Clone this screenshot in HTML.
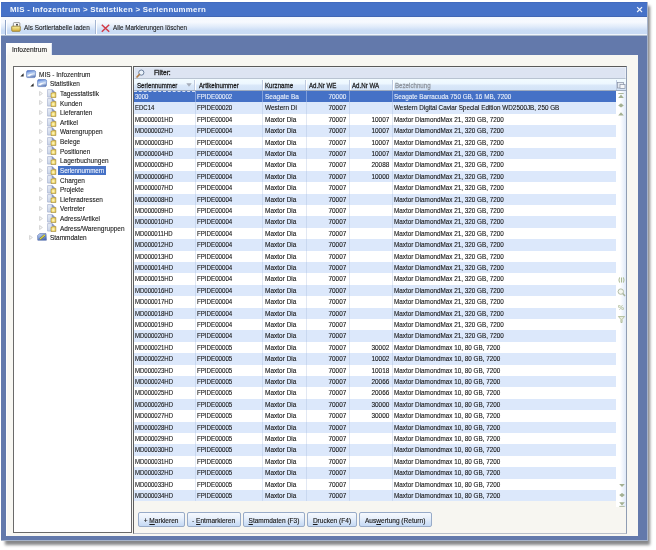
<!DOCTYPE html>
<html><head><meta charset="utf-8"><style>
*{box-sizing:border-box}
html,body{margin:0;padding:0}
body{width:656px;height:550px;position:relative;overflow:hidden;background:#fff;font-family:"Liberation Sans",sans-serif;color:#000}
.a{position:absolute}
.t{position:absolute;white-space:nowrap;line-height:1;-webkit-text-stroke:0.12px currentColor}
svg{position:absolute;overflow:visible}
</style></head>
<body>
<div class="a" style="left:5px;top:5.5px;width:645px;height:539.5px;background:rgba(60,62,64,0.62);filter:blur(1.6px)"></div>
<div class="a" style="left:1.2px;top:1.9px;width:646.6px;height:539.4px;background:#a6b3ca"></div>
<div class="a" style="left:1.2px;top:1.9px;width:645.6px;height:538.4px;background:#6379ab"></div>
<div class="a" style="left:1.2px;top:1.9px;width:645.8px;height:14.9px;background:linear-gradient(#3d63b6 0px,#4672c8 1px,#4672c8 13.5px,#3f62ac 14.9px)"></div>
<div class="t" style="left:10.00px;top:6.00px;font-size:7.3px;color:#f2f6fd;font-weight:bold;transform:scaleX(1.08);transform-origin:0 0;letter-spacing:0.24px;-webkit-text-stroke:0">MIS - Infozentrum &gt; Statistiken &gt; Seriennummern</div>
<svg style="left:636.9px;top:6.8px" width="5.2" height="5.2" viewBox="0 0 5.2 5.2"><path d="M0.6 0.6 L4.6 4.6 M4.6 0.6 L0.6 4.6" stroke="#f2f6fd" stroke-width="1.25" stroke-linecap="square"/></svg>
<div class="a" style="left:1.2px;top:16.8px;width:645.8px;height:17.6px;background:linear-gradient(#f4f8fe 0%,#f6f9fe 30%,#e2ecfa 55%,#cadcf5 80%,#c8dbf5 100%)"></div>
<div class="a" style="left:1.2px;top:33.8px;width:645.8px;height:1px;background:#eef4fc"></div>
<div class="a" style="left:1.2px;top:34.8px;width:645.8px;height:1.6px;background:#aebccd"></div>
<div class="a" style="left:5.3px;top:19.5px;width:1px;height:15px;background:#8fa3c6"></div>
<div class="a" style="left:6.3px;top:19.5px;width:1px;height:15px;background:#ffffff"></div>
<div class="a" style="left:95px;top:20px;width:1px;height:14px;background:#a5b6d3"></div>
<div class="a" style="left:96px;top:20px;width:1px;height:14px;background:#fff"></div>
<svg style="left:11.2px;top:22.3px" width="10" height="10" viewBox="0 0 10 10"><defs><linearGradient id="fg" x1="0" y1="0" x2="0" y2="1"><stop offset="0" stop-color="#f8f0a0"/><stop offset="1" stop-color="#d4ac38"/></linearGradient></defs><rect x="2.4" y="0.6" width="6.4" height="5.6" rx="0.8" fill="#fbfbfb" stroke="#7d7d7d" stroke-width="0.8"/><circle cx="6" cy="2.8" r="1" fill="#3a3a3a"/><path d="M0.7 4.8 Q0.7 4.2 1.4 4.2 L8.6 4.2 Q9.3 4.2 9.3 4.9 L9.2 8.6 Q9.2 9.3 8.5 9.3 L1.5 9.3 Q0.8 9.3 0.8 8.6 Z" fill="url(#fg)" stroke="#8f7526" stroke-width="0.8"/></svg>
<div class="t" style="left:23.80px;top:24.00px;font-size:7.9px;color:#1a1a1a;transform:scaleX(0.81);transform-origin:0 0;">Als Sortiertabelle laden</div>
<svg style="left:100.5px;top:24px" width="9" height="8.5" viewBox="0 0 9 8.5"><path d="M0.8 0.8 L8.2 7.7 M8.2 0.8 L0.8 7.7" stroke="#d23a46" stroke-width="1.5"/></svg>
<div class="t" style="left:112.60px;top:24.00px;font-size:7.9px;color:#1a1a1a;transform:scaleX(0.795);transform-origin:0 0;">Alle Markierungen l&#246;schen</div>
<div class="a" style="left:5.8px;top:43px;width:45.9px;height:12.5px;background:linear-gradient(#ffffff 0%,#fbfaf6 60%,#f8f7f2 100%);border-top:1px solid #fff;border-left:1px solid #fff;border-right:1px solid #dfe6f2"></div>
<div class="t" style="left:11.90px;top:47.00px;font-size:6.9px;color:#1a1a1a;transform:scaleX(0.96);transform-origin:0 0;">Infozentrum</div>
<div class="a" style="left:5.8px;top:54.8px;width:632.4px;height:481.2px;background:#f8f7f2;border-left:1px solid #fdfdfb"></div>
<div class="a" style="left:13px;top:66px;width:118.6px;height:466.5px;background:#fff;border:1px solid #6a6a6a"></div>
<svg style="left:19.7px;top:72.8px" width="4" height="4" viewBox="0 0 4 4"><path d="M3.6 0.2 L3.6 3.4 L0.3 3.4 Z" fill="#2a2a2a"/></svg>
<svg style="left:26.2px;top:69.8px" width="10" height="8" viewBox="0 0 10 8"><defs><linearGradient id="bi0" x1="0" y1="0" x2="0.3" y2="1"><stop offset="0" stop-color="#3f68cc"/><stop offset="0.35" stop-color="#9fbcec"/><stop offset="0.7" stop-color="#c9d8f0"/><stop offset="1" stop-color="#6b86bd"/></linearGradient></defs><path d="M1.8 0.6 L8.2 0.6 Q9.6 0.6 9.6 2.2 L9.4 6.4 Q9.2 7.6 7.8 7.6 L1.6 7.6 Q0.4 7.6 0.5 6.2 L0.6 2 Q0.7 0.6 1.8 0.6 Z" fill="url(#bi0)" stroke="#5474b8" stroke-width="0.6"/><path d="M1.6 5.8 Q3.5 3.2 8.4 3.4 Q5 4.6 3.2 6.4 Z" fill="#ffffff" opacity="0.9"/></svg>
<div class="t" style="left:39.00px;top:71.00px;font-size:8.1px;color:#1a1a1a;transform:scaleX(0.8);transform-origin:0 0;">MIS - Infozentrum</div>
<svg style="left:29.799999999999997px;top:82.82000000000001px" width="4" height="4" viewBox="0 0 4 4"><path d="M3.6 0.2 L3.6 3.4 L0.3 3.4 Z" fill="#2a2a2a"/></svg>
<svg style="left:36.6px;top:78.92px" width="10" height="8" viewBox="0 0 10 8"><defs><linearGradient id="bi1" x1="0" y1="0" x2="0.3" y2="1"><stop offset="0" stop-color="#3f68cc"/><stop offset="0.35" stop-color="#9fbcec"/><stop offset="0.7" stop-color="#c9d8f0"/><stop offset="1" stop-color="#6b86bd"/></linearGradient></defs><path d="M1.8 0.6 L8.2 0.6 Q9.6 0.6 9.6 2.2 L9.4 6.4 Q9.2 7.6 7.8 7.6 L1.6 7.6 Q0.4 7.6 0.5 6.2 L0.6 2 Q0.7 0.6 1.8 0.6 Z" fill="url(#bi1)" stroke="#5474b8" stroke-width="0.6"/><path d="M1.6 5.8 Q3.5 3.2 8.4 3.4 Q5 4.6 3.2 6.4 Z" fill="#ffffff" opacity="0.9"/></svg>
<div class="t" style="left:49.50px;top:80.00px;font-size:8.1px;color:#1a1a1a;transform:scaleX(0.8);transform-origin:0 0;">Statistiken</div>
<svg style="left:39.2px;top:90.64px" width="4" height="5" viewBox="0 0 4 5"><path d="M0.6 0.5 L3.4 2.5 L0.6 4.5 Z" fill="#fafafa" stroke="#b9b9b9" stroke-width="0.6"/></svg>
<svg style="left:47.2px;top:88.64px" width="9" height="9" viewBox="0 0 9 9"><defs><linearGradient id="di2" x1="0" y1="0" x2="1" y2="1"><stop offset="0" stop-color="#f2f5fb"/><stop offset="1" stop-color="#aebfdc"/></linearGradient><radialGradient id="dy2" cx="0.45" cy="0.55" r="0.75"><stop offset="0" stop-color="#fffbd0"/><stop offset="0.5" stop-color="#f0d870"/><stop offset="1" stop-color="#b8922c"/></radialGradient></defs><path d="M0.6 0.6 L5.2 0.6 L7.4 2.8 L7.4 8.1 L0.6 8.1 Z" fill="url(#di2)" stroke="#96a3c4" stroke-width="0.6"/><path d="M5.2 0.6 L5.2 2.8 L7.4 2.8" fill="#7f8cbc" stroke="#7f8cbc" stroke-width="0.6"/><path d="M4 4.2 L6 3.6 L8.9 3.4 L8.9 8.5 L4 8.5 Z" fill="url(#dy2)" stroke="#a0842c" stroke-width="0.5"/></svg>
<div class="t" style="left:59.80px;top:90.00px;font-size:8.1px;color:#1a1a1a;transform:scaleX(0.8);transform-origin:0 0;">Tagesstatistik</div>
<svg style="left:39.2px;top:100.26px" width="4" height="5" viewBox="0 0 4 5"><path d="M0.6 0.5 L3.4 2.5 L0.6 4.5 Z" fill="#fafafa" stroke="#b9b9b9" stroke-width="0.6"/></svg>
<svg style="left:47.2px;top:98.26px" width="9" height="9" viewBox="0 0 9 9"><defs><linearGradient id="di3" x1="0" y1="0" x2="1" y2="1"><stop offset="0" stop-color="#f2f5fb"/><stop offset="1" stop-color="#aebfdc"/></linearGradient><radialGradient id="dy3" cx="0.45" cy="0.55" r="0.75"><stop offset="0" stop-color="#fffbd0"/><stop offset="0.5" stop-color="#f0d870"/><stop offset="1" stop-color="#b8922c"/></radialGradient></defs><path d="M0.6 0.6 L5.2 0.6 L7.4 2.8 L7.4 8.1 L0.6 8.1 Z" fill="url(#di3)" stroke="#96a3c4" stroke-width="0.6"/><path d="M5.2 0.6 L5.2 2.8 L7.4 2.8" fill="#7f8cbc" stroke="#7f8cbc" stroke-width="0.6"/><path d="M4 4.2 L6 3.6 L8.9 3.4 L8.9 8.5 L4 8.5 Z" fill="url(#dy3)" stroke="#a0842c" stroke-width="0.5"/></svg>
<div class="t" style="left:59.80px;top:100.00px;font-size:8.1px;color:#1a1a1a;transform:scaleX(0.8);transform-origin:0 0;">Kunden</div>
<svg style="left:39.2px;top:109.88px" width="4" height="5" viewBox="0 0 4 5"><path d="M0.6 0.5 L3.4 2.5 L0.6 4.5 Z" fill="#fafafa" stroke="#b9b9b9" stroke-width="0.6"/></svg>
<svg style="left:47.2px;top:107.88px" width="9" height="9" viewBox="0 0 9 9"><defs><linearGradient id="di4" x1="0" y1="0" x2="1" y2="1"><stop offset="0" stop-color="#f2f5fb"/><stop offset="1" stop-color="#aebfdc"/></linearGradient><radialGradient id="dy4" cx="0.45" cy="0.55" r="0.75"><stop offset="0" stop-color="#fffbd0"/><stop offset="0.5" stop-color="#f0d870"/><stop offset="1" stop-color="#b8922c"/></radialGradient></defs><path d="M0.6 0.6 L5.2 0.6 L7.4 2.8 L7.4 8.1 L0.6 8.1 Z" fill="url(#di4)" stroke="#96a3c4" stroke-width="0.6"/><path d="M5.2 0.6 L5.2 2.8 L7.4 2.8" fill="#7f8cbc" stroke="#7f8cbc" stroke-width="0.6"/><path d="M4 4.2 L6 3.6 L8.9 3.4 L8.9 8.5 L4 8.5 Z" fill="url(#dy4)" stroke="#a0842c" stroke-width="0.5"/></svg>
<div class="t" style="left:59.80px;top:109.00px;font-size:8.1px;color:#1a1a1a;transform:scaleX(0.8);transform-origin:0 0;">Lieferanten</div>
<svg style="left:39.2px;top:119.5px" width="4" height="5" viewBox="0 0 4 5"><path d="M0.6 0.5 L3.4 2.5 L0.6 4.5 Z" fill="#fafafa" stroke="#b9b9b9" stroke-width="0.6"/></svg>
<svg style="left:47.2px;top:117.5px" width="9" height="9" viewBox="0 0 9 9"><defs><linearGradient id="di5" x1="0" y1="0" x2="1" y2="1"><stop offset="0" stop-color="#f2f5fb"/><stop offset="1" stop-color="#aebfdc"/></linearGradient><radialGradient id="dy5" cx="0.45" cy="0.55" r="0.75"><stop offset="0" stop-color="#fffbd0"/><stop offset="0.5" stop-color="#f0d870"/><stop offset="1" stop-color="#b8922c"/></radialGradient></defs><path d="M0.6 0.6 L5.2 0.6 L7.4 2.8 L7.4 8.1 L0.6 8.1 Z" fill="url(#di5)" stroke="#96a3c4" stroke-width="0.6"/><path d="M5.2 0.6 L5.2 2.8 L7.4 2.8" fill="#7f8cbc" stroke="#7f8cbc" stroke-width="0.6"/><path d="M4 4.2 L6 3.6 L8.9 3.4 L8.9 8.5 L4 8.5 Z" fill="url(#dy5)" stroke="#a0842c" stroke-width="0.5"/></svg>
<div class="t" style="left:59.80px;top:119.00px;font-size:8.1px;color:#1a1a1a;transform:scaleX(0.8);transform-origin:0 0;">Artikel</div>
<svg style="left:39.2px;top:129.12px" width="4" height="5" viewBox="0 0 4 5"><path d="M0.6 0.5 L3.4 2.5 L0.6 4.5 Z" fill="#fafafa" stroke="#b9b9b9" stroke-width="0.6"/></svg>
<svg style="left:47.2px;top:127.12px" width="9" height="9" viewBox="0 0 9 9"><defs><linearGradient id="di6" x1="0" y1="0" x2="1" y2="1"><stop offset="0" stop-color="#f2f5fb"/><stop offset="1" stop-color="#aebfdc"/></linearGradient><radialGradient id="dy6" cx="0.45" cy="0.55" r="0.75"><stop offset="0" stop-color="#fffbd0"/><stop offset="0.5" stop-color="#f0d870"/><stop offset="1" stop-color="#b8922c"/></radialGradient></defs><path d="M0.6 0.6 L5.2 0.6 L7.4 2.8 L7.4 8.1 L0.6 8.1 Z" fill="url(#di6)" stroke="#96a3c4" stroke-width="0.6"/><path d="M5.2 0.6 L5.2 2.8 L7.4 2.8" fill="#7f8cbc" stroke="#7f8cbc" stroke-width="0.6"/><path d="M4 4.2 L6 3.6 L8.9 3.4 L8.9 8.5 L4 8.5 Z" fill="url(#dy6)" stroke="#a0842c" stroke-width="0.5"/></svg>
<div class="t" style="left:59.80px;top:128.00px;font-size:8.1px;color:#1a1a1a;transform:scaleX(0.8);transform-origin:0 0;">Warengruppen</div>
<svg style="left:39.2px;top:138.73999999999998px" width="4" height="5" viewBox="0 0 4 5"><path d="M0.6 0.5 L3.4 2.5 L0.6 4.5 Z" fill="#fafafa" stroke="#b9b9b9" stroke-width="0.6"/></svg>
<svg style="left:47.2px;top:136.73999999999998px" width="9" height="9" viewBox="0 0 9 9"><defs><linearGradient id="di7" x1="0" y1="0" x2="1" y2="1"><stop offset="0" stop-color="#f2f5fb"/><stop offset="1" stop-color="#aebfdc"/></linearGradient><radialGradient id="dy7" cx="0.45" cy="0.55" r="0.75"><stop offset="0" stop-color="#fffbd0"/><stop offset="0.5" stop-color="#f0d870"/><stop offset="1" stop-color="#b8922c"/></radialGradient></defs><path d="M0.6 0.6 L5.2 0.6 L7.4 2.8 L7.4 8.1 L0.6 8.1 Z" fill="url(#di7)" stroke="#96a3c4" stroke-width="0.6"/><path d="M5.2 0.6 L5.2 2.8 L7.4 2.8" fill="#7f8cbc" stroke="#7f8cbc" stroke-width="0.6"/><path d="M4 4.2 L6 3.6 L8.9 3.4 L8.9 8.5 L4 8.5 Z" fill="url(#dy7)" stroke="#a0842c" stroke-width="0.5"/></svg>
<div class="t" style="left:59.80px;top:138.00px;font-size:8.1px;color:#1a1a1a;transform:scaleX(0.8);transform-origin:0 0;">Belege</div>
<svg style="left:39.2px;top:148.35999999999999px" width="4" height="5" viewBox="0 0 4 5"><path d="M0.6 0.5 L3.4 2.5 L0.6 4.5 Z" fill="#fafafa" stroke="#b9b9b9" stroke-width="0.6"/></svg>
<svg style="left:47.2px;top:146.35999999999999px" width="9" height="9" viewBox="0 0 9 9"><defs><linearGradient id="di8" x1="0" y1="0" x2="1" y2="1"><stop offset="0" stop-color="#f2f5fb"/><stop offset="1" stop-color="#aebfdc"/></linearGradient><radialGradient id="dy8" cx="0.45" cy="0.55" r="0.75"><stop offset="0" stop-color="#fffbd0"/><stop offset="0.5" stop-color="#f0d870"/><stop offset="1" stop-color="#b8922c"/></radialGradient></defs><path d="M0.6 0.6 L5.2 0.6 L7.4 2.8 L7.4 8.1 L0.6 8.1 Z" fill="url(#di8)" stroke="#96a3c4" stroke-width="0.6"/><path d="M5.2 0.6 L5.2 2.8 L7.4 2.8" fill="#7f8cbc" stroke="#7f8cbc" stroke-width="0.6"/><path d="M4 4.2 L6 3.6 L8.9 3.4 L8.9 8.5 L4 8.5 Z" fill="url(#dy8)" stroke="#a0842c" stroke-width="0.5"/></svg>
<div class="t" style="left:59.80px;top:148.00px;font-size:8.1px;color:#1a1a1a;transform:scaleX(0.8);transform-origin:0 0;">Positionen</div>
<svg style="left:39.2px;top:157.98px" width="4" height="5" viewBox="0 0 4 5"><path d="M0.6 0.5 L3.4 2.5 L0.6 4.5 Z" fill="#fafafa" stroke="#b9b9b9" stroke-width="0.6"/></svg>
<svg style="left:47.2px;top:155.98px" width="9" height="9" viewBox="0 0 9 9"><defs><linearGradient id="di9" x1="0" y1="0" x2="1" y2="1"><stop offset="0" stop-color="#f2f5fb"/><stop offset="1" stop-color="#aebfdc"/></linearGradient><radialGradient id="dy9" cx="0.45" cy="0.55" r="0.75"><stop offset="0" stop-color="#fffbd0"/><stop offset="0.5" stop-color="#f0d870"/><stop offset="1" stop-color="#b8922c"/></radialGradient></defs><path d="M0.6 0.6 L5.2 0.6 L7.4 2.8 L7.4 8.1 L0.6 8.1 Z" fill="url(#di9)" stroke="#96a3c4" stroke-width="0.6"/><path d="M5.2 0.6 L5.2 2.8 L7.4 2.8" fill="#7f8cbc" stroke="#7f8cbc" stroke-width="0.6"/><path d="M4 4.2 L6 3.6 L8.9 3.4 L8.9 8.5 L4 8.5 Z" fill="url(#dy9)" stroke="#a0842c" stroke-width="0.5"/></svg>
<div class="t" style="left:59.80px;top:157.00px;font-size:8.1px;color:#1a1a1a;transform:scaleX(0.8);transform-origin:0 0;">Lagerbuchungen</div>
<svg style="left:39.2px;top:167.6px" width="4" height="5" viewBox="0 0 4 5"><path d="M0.6 0.5 L3.4 2.5 L0.6 4.5 Z" fill="#fafafa" stroke="#b9b9b9" stroke-width="0.6"/></svg>
<svg style="left:47.2px;top:165.6px" width="9" height="9" viewBox="0 0 9 9"><defs><linearGradient id="di10" x1="0" y1="0" x2="1" y2="1"><stop offset="0" stop-color="#f2f5fb"/><stop offset="1" stop-color="#aebfdc"/></linearGradient><radialGradient id="dy10" cx="0.45" cy="0.55" r="0.75"><stop offset="0" stop-color="#fffbd0"/><stop offset="0.5" stop-color="#f0d870"/><stop offset="1" stop-color="#b8922c"/></radialGradient></defs><path d="M0.6 0.6 L5.2 0.6 L7.4 2.8 L7.4 8.1 L0.6 8.1 Z" fill="url(#di10)" stroke="#96a3c4" stroke-width="0.6"/><path d="M5.2 0.6 L5.2 2.8 L7.4 2.8" fill="#7f8cbc" stroke="#7f8cbc" stroke-width="0.6"/><path d="M4 4.2 L6 3.6 L8.9 3.4 L8.9 8.5 L4 8.5 Z" fill="url(#dy10)" stroke="#a0842c" stroke-width="0.5"/></svg>
<div class="a" style="left:58px;top:166.2px;width:48.4px;height:8.4px;background:#4571c6"></div>
<div class="t" style="left:59.80px;top:167.00px;font-size:8.1px;color:#f0f4fc;transform:scaleX(0.77);transform-origin:0 0;">Seriennummern</div>
<svg style="left:39.2px;top:177.22px" width="4" height="5" viewBox="0 0 4 5"><path d="M0.6 0.5 L3.4 2.5 L0.6 4.5 Z" fill="#fafafa" stroke="#b9b9b9" stroke-width="0.6"/></svg>
<svg style="left:47.2px;top:175.22px" width="9" height="9" viewBox="0 0 9 9"><defs><linearGradient id="di11" x1="0" y1="0" x2="1" y2="1"><stop offset="0" stop-color="#f2f5fb"/><stop offset="1" stop-color="#aebfdc"/></linearGradient><radialGradient id="dy11" cx="0.45" cy="0.55" r="0.75"><stop offset="0" stop-color="#fffbd0"/><stop offset="0.5" stop-color="#f0d870"/><stop offset="1" stop-color="#b8922c"/></radialGradient></defs><path d="M0.6 0.6 L5.2 0.6 L7.4 2.8 L7.4 8.1 L0.6 8.1 Z" fill="url(#di11)" stroke="#96a3c4" stroke-width="0.6"/><path d="M5.2 0.6 L5.2 2.8 L7.4 2.8" fill="#7f8cbc" stroke="#7f8cbc" stroke-width="0.6"/><path d="M4 4.2 L6 3.6 L8.9 3.4 L8.9 8.5 L4 8.5 Z" fill="url(#dy11)" stroke="#a0842c" stroke-width="0.5"/></svg>
<div class="t" style="left:59.80px;top:177.00px;font-size:8.1px;color:#1a1a1a;transform:scaleX(0.8);transform-origin:0 0;">Chargen</div>
<svg style="left:39.2px;top:186.84px" width="4" height="5" viewBox="0 0 4 5"><path d="M0.6 0.5 L3.4 2.5 L0.6 4.5 Z" fill="#fafafa" stroke="#b9b9b9" stroke-width="0.6"/></svg>
<svg style="left:47.2px;top:184.84px" width="9" height="9" viewBox="0 0 9 9"><defs><linearGradient id="di12" x1="0" y1="0" x2="1" y2="1"><stop offset="0" stop-color="#f2f5fb"/><stop offset="1" stop-color="#aebfdc"/></linearGradient><radialGradient id="dy12" cx="0.45" cy="0.55" r="0.75"><stop offset="0" stop-color="#fffbd0"/><stop offset="0.5" stop-color="#f0d870"/><stop offset="1" stop-color="#b8922c"/></radialGradient></defs><path d="M0.6 0.6 L5.2 0.6 L7.4 2.8 L7.4 8.1 L0.6 8.1 Z" fill="url(#di12)" stroke="#96a3c4" stroke-width="0.6"/><path d="M5.2 0.6 L5.2 2.8 L7.4 2.8" fill="#7f8cbc" stroke="#7f8cbc" stroke-width="0.6"/><path d="M4 4.2 L6 3.6 L8.9 3.4 L8.9 8.5 L4 8.5 Z" fill="url(#dy12)" stroke="#a0842c" stroke-width="0.5"/></svg>
<div class="t" style="left:59.80px;top:186.00px;font-size:8.1px;color:#1a1a1a;transform:scaleX(0.8);transform-origin:0 0;">Projekte</div>
<svg style="left:39.2px;top:196.46px" width="4" height="5" viewBox="0 0 4 5"><path d="M0.6 0.5 L3.4 2.5 L0.6 4.5 Z" fill="#fafafa" stroke="#b9b9b9" stroke-width="0.6"/></svg>
<svg style="left:47.2px;top:194.46px" width="9" height="9" viewBox="0 0 9 9"><defs><linearGradient id="di13" x1="0" y1="0" x2="1" y2="1"><stop offset="0" stop-color="#f2f5fb"/><stop offset="1" stop-color="#aebfdc"/></linearGradient><radialGradient id="dy13" cx="0.45" cy="0.55" r="0.75"><stop offset="0" stop-color="#fffbd0"/><stop offset="0.5" stop-color="#f0d870"/><stop offset="1" stop-color="#b8922c"/></radialGradient></defs><path d="M0.6 0.6 L5.2 0.6 L7.4 2.8 L7.4 8.1 L0.6 8.1 Z" fill="url(#di13)" stroke="#96a3c4" stroke-width="0.6"/><path d="M5.2 0.6 L5.2 2.8 L7.4 2.8" fill="#7f8cbc" stroke="#7f8cbc" stroke-width="0.6"/><path d="M4 4.2 L6 3.6 L8.9 3.4 L8.9 8.5 L4 8.5 Z" fill="url(#dy13)" stroke="#a0842c" stroke-width="0.5"/></svg>
<div class="t" style="left:59.80px;top:196.00px;font-size:8.1px;color:#1a1a1a;transform:scaleX(0.8);transform-origin:0 0;">Lieferadressen</div>
<svg style="left:39.2px;top:206.07999999999998px" width="4" height="5" viewBox="0 0 4 5"><path d="M0.6 0.5 L3.4 2.5 L0.6 4.5 Z" fill="#fafafa" stroke="#b9b9b9" stroke-width="0.6"/></svg>
<svg style="left:47.2px;top:204.07999999999998px" width="9" height="9" viewBox="0 0 9 9"><defs><linearGradient id="di14" x1="0" y1="0" x2="1" y2="1"><stop offset="0" stop-color="#f2f5fb"/><stop offset="1" stop-color="#aebfdc"/></linearGradient><radialGradient id="dy14" cx="0.45" cy="0.55" r="0.75"><stop offset="0" stop-color="#fffbd0"/><stop offset="0.5" stop-color="#f0d870"/><stop offset="1" stop-color="#b8922c"/></radialGradient></defs><path d="M0.6 0.6 L5.2 0.6 L7.4 2.8 L7.4 8.1 L0.6 8.1 Z" fill="url(#di14)" stroke="#96a3c4" stroke-width="0.6"/><path d="M5.2 0.6 L5.2 2.8 L7.4 2.8" fill="#7f8cbc" stroke="#7f8cbc" stroke-width="0.6"/><path d="M4 4.2 L6 3.6 L8.9 3.4 L8.9 8.5 L4 8.5 Z" fill="url(#dy14)" stroke="#a0842c" stroke-width="0.5"/></svg>
<div class="t" style="left:59.80px;top:205.00px;font-size:8.1px;color:#1a1a1a;transform:scaleX(0.8);transform-origin:0 0;">Vertreter</div>
<svg style="left:39.2px;top:215.7px" width="4" height="5" viewBox="0 0 4 5"><path d="M0.6 0.5 L3.4 2.5 L0.6 4.5 Z" fill="#fafafa" stroke="#b9b9b9" stroke-width="0.6"/></svg>
<svg style="left:47.2px;top:213.7px" width="9" height="9" viewBox="0 0 9 9"><defs><linearGradient id="di15" x1="0" y1="0" x2="1" y2="1"><stop offset="0" stop-color="#f2f5fb"/><stop offset="1" stop-color="#aebfdc"/></linearGradient><radialGradient id="dy15" cx="0.45" cy="0.55" r="0.75"><stop offset="0" stop-color="#fffbd0"/><stop offset="0.5" stop-color="#f0d870"/><stop offset="1" stop-color="#b8922c"/></radialGradient></defs><path d="M0.6 0.6 L5.2 0.6 L7.4 2.8 L7.4 8.1 L0.6 8.1 Z" fill="url(#di15)" stroke="#96a3c4" stroke-width="0.6"/><path d="M5.2 0.6 L5.2 2.8 L7.4 2.8" fill="#7f8cbc" stroke="#7f8cbc" stroke-width="0.6"/><path d="M4 4.2 L6 3.6 L8.9 3.4 L8.9 8.5 L4 8.5 Z" fill="url(#dy15)" stroke="#a0842c" stroke-width="0.5"/></svg>
<div class="t" style="left:59.80px;top:215.00px;font-size:8.1px;color:#1a1a1a;transform:scaleX(0.8);transform-origin:0 0;">Adress/Artikel</div>
<svg style="left:39.2px;top:225.32px" width="4" height="5" viewBox="0 0 4 5"><path d="M0.6 0.5 L3.4 2.5 L0.6 4.5 Z" fill="#fafafa" stroke="#b9b9b9" stroke-width="0.6"/></svg>
<svg style="left:47.2px;top:223.32px" width="9" height="9" viewBox="0 0 9 9"><defs><linearGradient id="di16" x1="0" y1="0" x2="1" y2="1"><stop offset="0" stop-color="#f2f5fb"/><stop offset="1" stop-color="#aebfdc"/></linearGradient><radialGradient id="dy16" cx="0.45" cy="0.55" r="0.75"><stop offset="0" stop-color="#fffbd0"/><stop offset="0.5" stop-color="#f0d870"/><stop offset="1" stop-color="#b8922c"/></radialGradient></defs><path d="M0.6 0.6 L5.2 0.6 L7.4 2.8 L7.4 8.1 L0.6 8.1 Z" fill="url(#di16)" stroke="#96a3c4" stroke-width="0.6"/><path d="M5.2 0.6 L5.2 2.8 L7.4 2.8" fill="#7f8cbc" stroke="#7f8cbc" stroke-width="0.6"/><path d="M4 4.2 L6 3.6 L8.9 3.4 L8.9 8.5 L4 8.5 Z" fill="url(#dy16)" stroke="#a0842c" stroke-width="0.5"/></svg>
<div class="t" style="left:59.80px;top:225.00px;font-size:8.1px;color:#1a1a1a;transform:scaleX(0.8);transform-origin:0 0;">Adress/Warengruppen</div>
<svg style="left:29.0px;top:234.94px" width="4" height="5" viewBox="0 0 4 5"><path d="M0.6 0.5 L3.4 2.5 L0.6 4.5 Z" fill="#fafafa" stroke="#b9b9b9" stroke-width="0.6"/></svg>
<svg style="left:36.6px;top:232.94px" width="10" height="8" viewBox="0 0 10 8"><defs><linearGradient id="si17" x1="0" y1="0" x2="0.6" y2="1"><stop offset="0" stop-color="#d2def6"/><stop offset="0.5" stop-color="#8aa6de"/><stop offset="1" stop-color="#4d6cb6"/></linearGradient></defs><path d="M0.6 2.6 L2.6 0.6 L9 0.6 L9.4 7.2 L0.8 7.2 Z" fill="url(#si17)" stroke="#4a64a4" stroke-width="0.6"/><path d="M3 6.2 L7.8 2" stroke="#6f6a30" stroke-width="2"/><path d="M3 6.2 L7.8 2" stroke="#e2dc4a" stroke-width="1.1"/></svg>
<div class="t" style="left:49.50px;top:234.00px;font-size:8.1px;color:#1a1a1a;transform:scaleX(0.8);transform-origin:0 0;">Stammdaten</div>
<div class="a" style="left:132.6px;top:66.3px;width:494.4px;height:467.6px;background:#f7f6f1;border-top:1px solid #5a5a5a;border-left:1px solid #5f5f5f;border-right:1px solid #8f9db3;border-bottom:1px solid #b9bfca"></div>
<div class="a" style="left:133.8px;top:67.3px;width:492px;height:11.6px;background:#dde4f2;border:1px solid #e9eef7;border-bottom-color:#b8c3d1"></div>
<svg style="left:136px;top:68.6px" width="9" height="9" viewBox="0 0 9 9"><circle cx="5.3" cy="3.6" r="2.6" fill="#eaf2fb" stroke="#5e7391" stroke-width="0.9"/><path d="M3.4 5.5 L1 8" stroke="#b07a44" stroke-width="1.7" stroke-linecap="round"/></svg>
<div class="t" style="left:154.20px;top:70.00px;font-size:6.9px;color:#222;transform:scaleX(0.97);transform-origin:0 0;-webkit-text-stroke:0.3px #222">Filter:</div>
<div class="a" style="left:133.6px;top:78.6px;width:492.4px;height:12.400000000000006px;background:linear-gradient(#f2fbff 0%,#eef8ff 40%,#d9e7f9 60%,#d3e3f7 100%);border-bottom:1px solid #9eabbf"></div>
<div class="t" style="left:136.70px;top:82.00px;font-size:8.0px;color:#1a1a1a;transform:scaleX(0.77);transform-origin:0 0;-webkit-text-stroke:0.28px #1a1a1a">Seriennummer</div>
<div class="t" style="left:199.20px;top:82.00px;font-size:8.0px;color:#1a1a1a;transform:scaleX(0.77);transform-origin:0 0;-webkit-text-stroke:0.28px #1a1a1a">Artikelnummer</div>
<div class="a" style="left:194.4px;top:79.8px;width:1px;height:10.200000000000006px;background:#bfcbe0"></div>
<div class="a" style="left:195.4px;top:79.8px;width:1px;height:10.200000000000006px;background:#fff"></div>
<div class="t" style="left:265.40px;top:82.00px;font-size:8.0px;color:#1a1a1a;transform:scaleX(0.77);transform-origin:0 0;-webkit-text-stroke:0.28px #1a1a1a">Kurzname</div>
<div class="a" style="left:262.2px;top:79.8px;width:1px;height:10.200000000000006px;background:#bfcbe0"></div>
<div class="a" style="left:263.2px;top:79.8px;width:1px;height:10.200000000000006px;background:#fff"></div>
<div class="t" style="left:309.00px;top:82.00px;font-size:8.0px;color:#1a1a1a;transform:scaleX(0.77);transform-origin:0 0;-webkit-text-stroke:0.28px #1a1a1a">Ad.Nr WE</div>
<div class="a" style="left:305.4px;top:79.8px;width:1px;height:10.200000000000006px;background:#bfcbe0"></div>
<div class="a" style="left:306.4px;top:79.8px;width:1px;height:10.200000000000006px;background:#fff"></div>
<div class="t" style="left:352.30px;top:82.00px;font-size:8.0px;color:#1a1a1a;transform:scaleX(0.77);transform-origin:0 0;-webkit-text-stroke:0.28px #1a1a1a">Ad.Nr WA</div>
<div class="a" style="left:348.9px;top:79.8px;width:1px;height:10.200000000000006px;background:#bfcbe0"></div>
<div class="a" style="left:349.9px;top:79.8px;width:1px;height:10.200000000000006px;background:#fff"></div>
<div class="t" style="left:395.00px;top:82.00px;font-size:8.0px;color:#8d939c;transform:scaleX(0.77);transform-origin:0 0;-webkit-text-stroke:0.28px #8d939c">Bezeichnung</div>
<div class="a" style="left:391.7px;top:79.8px;width:1px;height:10.200000000000006px;background:#bfcbe0"></div>
<div class="a" style="left:392.7px;top:79.8px;width:1px;height:10.200000000000006px;background:#fff"></div>
<div class="a" style="left:615.7px;top:79.8px;width:1px;height:10.200000000000006px;background:#bfcbe0"></div>
<svg style="left:185.5px;top:82.89999999999999px" width="6" height="4" viewBox="0 0 6 4"><path d="M0.3 0.3 L5.7 0.3 L3 3.8 Z" fill="#a5adba"/></svg>
<svg style="left:617.3px;top:81.39999999999999px" width="9" height="8" viewBox="0 0 9 8"><rect x="0.5" y="1.5" width="6" height="5.5" fill="#e4e9f1" stroke="#8791a3" stroke-width="0.7"/><rect x="3" y="3.5" width="5" height="4" fill="#f4f6f9" stroke="#8791a3" stroke-width="0.7"/></svg>
<div class="a" style="left:133.6px;top:91.00px;width:482.4px;height:11.42px;background:#4571c6"></div>
<div class="t" style="left:135.20px;top:93.00px;font-size:7.3px;color:#eaf0fb;transform:scaleX(0.821);transform-origin:0 0;">3000</div>
<div class="t" style="left:197.00px;top:93.00px;font-size:7.3px;color:#eaf0fb;transform:scaleX(0.844);transform-origin:0 0;">FPIDE00002</div>
<div class="t" style="left:264.80px;top:93.00px;font-size:7.3px;color:#eaf0fb;transform:scaleX(0.889);transform-origin:0 0;">Seagate Ba</div>
<div class="t" style="right:309.30px;top:93.00px;font-size:7.3px;color:#eaf0fb;transform:scaleX(0.88);transform-origin:100% 0;">70000</div>
<div class="t" style="left:394.30px;top:93.00px;font-size:7.3px;color:#eaf0fb;transform:scaleX(0.868);transform-origin:0 0;">Seagate Barracuda 750 GB, 16 MB, 7200</div>
<div class="a" style="left:133.6px;top:91.0px;width:61.400000000000006px;height:11.4px;border-top:1px dashed #d8e2f6"></div>
<div class="a" style="left:133.6px;top:102.40px;width:482.4px;height:11.42px;background:#dce8fb"></div>
<div class="t" style="left:135.20px;top:104.00px;font-size:7.3px;color:#151515;transform:scaleX(0.821);transform-origin:0 0;">EDC14</div>
<div class="t" style="left:197.00px;top:104.00px;font-size:7.3px;color:#151515;transform:scaleX(0.844);transform-origin:0 0;">FPIDE00020</div>
<div class="t" style="left:264.80px;top:104.00px;font-size:7.3px;color:#151515;transform:scaleX(0.889);transform-origin:0 0;">Western Di</div>
<div class="t" style="right:309.30px;top:104.00px;font-size:7.3px;color:#151515;transform:scaleX(0.88);transform-origin:100% 0;">70007</div>
<div class="t" style="left:394.30px;top:104.00px;font-size:7.3px;color:#151515;transform:scaleX(0.868);transform-origin:0 0;">Western Digital Caviar Special Edition WD2500JB, 250 GB</div>
<div class="a" style="left:133.6px;top:113.80px;width:482.4px;height:11.42px;background:#ffffff"></div>
<div class="t" style="left:135.20px;top:116.00px;font-size:7.3px;color:#151515;transform:scaleX(0.821);transform-origin:0 0;">MD000001HD</div>
<div class="t" style="left:197.00px;top:116.00px;font-size:7.3px;color:#151515;transform:scaleX(0.844);transform-origin:0 0;">FPIDE00004</div>
<div class="t" style="left:264.80px;top:116.00px;font-size:7.3px;color:#151515;transform:scaleX(0.889);transform-origin:0 0;">Maxtor Dia</div>
<div class="t" style="right:309.30px;top:116.00px;font-size:7.3px;color:#151515;transform:scaleX(0.88);transform-origin:100% 0;">70007</div>
<div class="t" style="right:266.50px;top:116.00px;font-size:7.3px;color:#151515;transform:scaleX(0.88);transform-origin:100% 0;">10007</div>
<div class="t" style="left:394.30px;top:116.00px;font-size:7.3px;color:#151515;transform:scaleX(0.868);transform-origin:0 0;">Maxtor DiamondMax 21, 320 GB, 7200</div>
<div class="a" style="left:133.6px;top:125.20px;width:482.4px;height:11.42px;background:#dce8fb"></div>
<div class="t" style="left:135.20px;top:127.00px;font-size:7.3px;color:#151515;transform:scaleX(0.821);transform-origin:0 0;">MD000002HD</div>
<div class="t" style="left:197.00px;top:127.00px;font-size:7.3px;color:#151515;transform:scaleX(0.844);transform-origin:0 0;">FPIDE00004</div>
<div class="t" style="left:264.80px;top:127.00px;font-size:7.3px;color:#151515;transform:scaleX(0.889);transform-origin:0 0;">Maxtor Dia</div>
<div class="t" style="right:309.30px;top:127.00px;font-size:7.3px;color:#151515;transform:scaleX(0.88);transform-origin:100% 0;">70007</div>
<div class="t" style="right:266.50px;top:127.00px;font-size:7.3px;color:#151515;transform:scaleX(0.88);transform-origin:100% 0;">10007</div>
<div class="t" style="left:394.30px;top:127.00px;font-size:7.3px;color:#151515;transform:scaleX(0.868);transform-origin:0 0;">Maxtor DiamondMax 21, 320 GB, 7200</div>
<div class="a" style="left:133.6px;top:136.60px;width:482.4px;height:11.42px;background:#ffffff"></div>
<div class="t" style="left:135.20px;top:139.00px;font-size:7.3px;color:#151515;transform:scaleX(0.821);transform-origin:0 0;">MD000003HD</div>
<div class="t" style="left:197.00px;top:139.00px;font-size:7.3px;color:#151515;transform:scaleX(0.844);transform-origin:0 0;">FPIDE00004</div>
<div class="t" style="left:264.80px;top:139.00px;font-size:7.3px;color:#151515;transform:scaleX(0.889);transform-origin:0 0;">Maxtor Dia</div>
<div class="t" style="right:309.30px;top:139.00px;font-size:7.3px;color:#151515;transform:scaleX(0.88);transform-origin:100% 0;">70007</div>
<div class="t" style="right:266.50px;top:139.00px;font-size:7.3px;color:#151515;transform:scaleX(0.88);transform-origin:100% 0;">10007</div>
<div class="t" style="left:394.30px;top:139.00px;font-size:7.3px;color:#151515;transform:scaleX(0.868);transform-origin:0 0;">Maxtor DiamondMax 21, 320 GB, 7200</div>
<div class="a" style="left:133.6px;top:148.00px;width:482.4px;height:11.42px;background:#dce8fb"></div>
<div class="t" style="left:135.20px;top:150.00px;font-size:7.3px;color:#151515;transform:scaleX(0.821);transform-origin:0 0;">MD000004HD</div>
<div class="t" style="left:197.00px;top:150.00px;font-size:7.3px;color:#151515;transform:scaleX(0.844);transform-origin:0 0;">FPIDE00004</div>
<div class="t" style="left:264.80px;top:150.00px;font-size:7.3px;color:#151515;transform:scaleX(0.889);transform-origin:0 0;">Maxtor Dia</div>
<div class="t" style="right:309.30px;top:150.00px;font-size:7.3px;color:#151515;transform:scaleX(0.88);transform-origin:100% 0;">70007</div>
<div class="t" style="right:266.50px;top:150.00px;font-size:7.3px;color:#151515;transform:scaleX(0.88);transform-origin:100% 0;">10007</div>
<div class="t" style="left:394.30px;top:150.00px;font-size:7.3px;color:#151515;transform:scaleX(0.868);transform-origin:0 0;">Maxtor DiamondMax 21, 320 GB, 7200</div>
<div class="a" style="left:133.6px;top:159.40px;width:482.4px;height:11.42px;background:#ffffff"></div>
<div class="t" style="left:135.20px;top:161.00px;font-size:7.3px;color:#151515;transform:scaleX(0.821);transform-origin:0 0;">MD000005HD</div>
<div class="t" style="left:197.00px;top:161.00px;font-size:7.3px;color:#151515;transform:scaleX(0.844);transform-origin:0 0;">FPIDE00004</div>
<div class="t" style="left:264.80px;top:161.00px;font-size:7.3px;color:#151515;transform:scaleX(0.889);transform-origin:0 0;">Maxtor Dia</div>
<div class="t" style="right:309.30px;top:161.00px;font-size:7.3px;color:#151515;transform:scaleX(0.88);transform-origin:100% 0;">70007</div>
<div class="t" style="right:266.50px;top:161.00px;font-size:7.3px;color:#151515;transform:scaleX(0.88);transform-origin:100% 0;">20088</div>
<div class="t" style="left:394.30px;top:161.00px;font-size:7.3px;color:#151515;transform:scaleX(0.868);transform-origin:0 0;">Maxtor DiamondMax 21, 320 GB, 7200</div>
<div class="a" style="left:133.6px;top:170.80px;width:482.4px;height:11.42px;background:#dce8fb"></div>
<div class="t" style="left:135.20px;top:173.00px;font-size:7.3px;color:#151515;transform:scaleX(0.821);transform-origin:0 0;">MD000006HD</div>
<div class="t" style="left:197.00px;top:173.00px;font-size:7.3px;color:#151515;transform:scaleX(0.844);transform-origin:0 0;">FPIDE00004</div>
<div class="t" style="left:264.80px;top:173.00px;font-size:7.3px;color:#151515;transform:scaleX(0.889);transform-origin:0 0;">Maxtor Dia</div>
<div class="t" style="right:309.30px;top:173.00px;font-size:7.3px;color:#151515;transform:scaleX(0.88);transform-origin:100% 0;">70007</div>
<div class="t" style="right:266.50px;top:173.00px;font-size:7.3px;color:#151515;transform:scaleX(0.88);transform-origin:100% 0;">10000</div>
<div class="t" style="left:394.30px;top:173.00px;font-size:7.3px;color:#151515;transform:scaleX(0.868);transform-origin:0 0;">Maxtor DiamondMax 21, 320 GB, 7200</div>
<div class="a" style="left:133.6px;top:182.20px;width:482.4px;height:11.42px;background:#ffffff"></div>
<div class="t" style="left:135.20px;top:184.00px;font-size:7.3px;color:#151515;transform:scaleX(0.821);transform-origin:0 0;">MD000007HD</div>
<div class="t" style="left:197.00px;top:184.00px;font-size:7.3px;color:#151515;transform:scaleX(0.844);transform-origin:0 0;">FPIDE00004</div>
<div class="t" style="left:264.80px;top:184.00px;font-size:7.3px;color:#151515;transform:scaleX(0.889);transform-origin:0 0;">Maxtor Dia</div>
<div class="t" style="right:309.30px;top:184.00px;font-size:7.3px;color:#151515;transform:scaleX(0.88);transform-origin:100% 0;">70007</div>
<div class="t" style="left:394.30px;top:184.00px;font-size:7.3px;color:#151515;transform:scaleX(0.868);transform-origin:0 0;">Maxtor DiamondMax 21, 320 GB, 7200</div>
<div class="a" style="left:133.6px;top:193.60px;width:482.4px;height:11.42px;background:#dce8fb"></div>
<div class="t" style="left:135.20px;top:196.00px;font-size:7.3px;color:#151515;transform:scaleX(0.821);transform-origin:0 0;">MD000008HD</div>
<div class="t" style="left:197.00px;top:196.00px;font-size:7.3px;color:#151515;transform:scaleX(0.844);transform-origin:0 0;">FPIDE00004</div>
<div class="t" style="left:264.80px;top:196.00px;font-size:7.3px;color:#151515;transform:scaleX(0.889);transform-origin:0 0;">Maxtor Dia</div>
<div class="t" style="right:309.30px;top:196.00px;font-size:7.3px;color:#151515;transform:scaleX(0.88);transform-origin:100% 0;">70007</div>
<div class="t" style="left:394.30px;top:196.00px;font-size:7.3px;color:#151515;transform:scaleX(0.868);transform-origin:0 0;">Maxtor DiamondMax 21, 320 GB, 7200</div>
<div class="a" style="left:133.6px;top:205.00px;width:482.4px;height:11.42px;background:#ffffff"></div>
<div class="t" style="left:135.20px;top:207.00px;font-size:7.3px;color:#151515;transform:scaleX(0.821);transform-origin:0 0;">MD000009HD</div>
<div class="t" style="left:197.00px;top:207.00px;font-size:7.3px;color:#151515;transform:scaleX(0.844);transform-origin:0 0;">FPIDE00004</div>
<div class="t" style="left:264.80px;top:207.00px;font-size:7.3px;color:#151515;transform:scaleX(0.889);transform-origin:0 0;">Maxtor Dia</div>
<div class="t" style="right:309.30px;top:207.00px;font-size:7.3px;color:#151515;transform:scaleX(0.88);transform-origin:100% 0;">70007</div>
<div class="t" style="left:394.30px;top:207.00px;font-size:7.3px;color:#151515;transform:scaleX(0.868);transform-origin:0 0;">Maxtor DiamondMax 21, 320 GB, 7200</div>
<div class="a" style="left:133.6px;top:216.40px;width:482.4px;height:11.42px;background:#dce8fb"></div>
<div class="t" style="left:135.20px;top:218.00px;font-size:7.3px;color:#151515;transform:scaleX(0.821);transform-origin:0 0;">MD000010HD</div>
<div class="t" style="left:197.00px;top:218.00px;font-size:7.3px;color:#151515;transform:scaleX(0.844);transform-origin:0 0;">FPIDE00004</div>
<div class="t" style="left:264.80px;top:218.00px;font-size:7.3px;color:#151515;transform:scaleX(0.889);transform-origin:0 0;">Maxtor Dia</div>
<div class="t" style="right:309.30px;top:218.00px;font-size:7.3px;color:#151515;transform:scaleX(0.88);transform-origin:100% 0;">70007</div>
<div class="t" style="left:394.30px;top:218.00px;font-size:7.3px;color:#151515;transform:scaleX(0.868);transform-origin:0 0;">Maxtor DiamondMax 21, 320 GB, 7200</div>
<div class="a" style="left:133.6px;top:227.80px;width:482.4px;height:11.42px;background:#ffffff"></div>
<div class="t" style="left:135.20px;top:230.00px;font-size:7.3px;color:#151515;transform:scaleX(0.821);transform-origin:0 0;">MD000011HD</div>
<div class="t" style="left:197.00px;top:230.00px;font-size:7.3px;color:#151515;transform:scaleX(0.844);transform-origin:0 0;">FPIDE00004</div>
<div class="t" style="left:264.80px;top:230.00px;font-size:7.3px;color:#151515;transform:scaleX(0.889);transform-origin:0 0;">Maxtor Dia</div>
<div class="t" style="right:309.30px;top:230.00px;font-size:7.3px;color:#151515;transform:scaleX(0.88);transform-origin:100% 0;">70007</div>
<div class="t" style="left:394.30px;top:230.00px;font-size:7.3px;color:#151515;transform:scaleX(0.868);transform-origin:0 0;">Maxtor DiamondMax 21, 320 GB, 7200</div>
<div class="a" style="left:133.6px;top:239.20px;width:482.4px;height:11.42px;background:#dce8fb"></div>
<div class="t" style="left:135.20px;top:241.00px;font-size:7.3px;color:#151515;transform:scaleX(0.821);transform-origin:0 0;">MD000012HD</div>
<div class="t" style="left:197.00px;top:241.00px;font-size:7.3px;color:#151515;transform:scaleX(0.844);transform-origin:0 0;">FPIDE00004</div>
<div class="t" style="left:264.80px;top:241.00px;font-size:7.3px;color:#151515;transform:scaleX(0.889);transform-origin:0 0;">Maxtor Dia</div>
<div class="t" style="right:309.30px;top:241.00px;font-size:7.3px;color:#151515;transform:scaleX(0.88);transform-origin:100% 0;">70007</div>
<div class="t" style="left:394.30px;top:241.00px;font-size:7.3px;color:#151515;transform:scaleX(0.868);transform-origin:0 0;">Maxtor DiamondMax 21, 320 GB, 7200</div>
<div class="a" style="left:133.6px;top:250.60px;width:482.4px;height:11.42px;background:#ffffff"></div>
<div class="t" style="left:135.20px;top:253.00px;font-size:7.3px;color:#151515;transform:scaleX(0.821);transform-origin:0 0;">MD000013HD</div>
<div class="t" style="left:197.00px;top:253.00px;font-size:7.3px;color:#151515;transform:scaleX(0.844);transform-origin:0 0;">FPIDE00004</div>
<div class="t" style="left:264.80px;top:253.00px;font-size:7.3px;color:#151515;transform:scaleX(0.889);transform-origin:0 0;">Maxtor Dia</div>
<div class="t" style="right:309.30px;top:253.00px;font-size:7.3px;color:#151515;transform:scaleX(0.88);transform-origin:100% 0;">70007</div>
<div class="t" style="left:394.30px;top:253.00px;font-size:7.3px;color:#151515;transform:scaleX(0.868);transform-origin:0 0;">Maxtor DiamondMax 21, 320 GB, 7200</div>
<div class="a" style="left:133.6px;top:262.00px;width:482.4px;height:11.42px;background:#dce8fb"></div>
<div class="t" style="left:135.20px;top:264.00px;font-size:7.3px;color:#151515;transform:scaleX(0.821);transform-origin:0 0;">MD000014HD</div>
<div class="t" style="left:197.00px;top:264.00px;font-size:7.3px;color:#151515;transform:scaleX(0.844);transform-origin:0 0;">FPIDE00004</div>
<div class="t" style="left:264.80px;top:264.00px;font-size:7.3px;color:#151515;transform:scaleX(0.889);transform-origin:0 0;">Maxtor Dia</div>
<div class="t" style="right:309.30px;top:264.00px;font-size:7.3px;color:#151515;transform:scaleX(0.88);transform-origin:100% 0;">70007</div>
<div class="t" style="left:394.30px;top:264.00px;font-size:7.3px;color:#151515;transform:scaleX(0.868);transform-origin:0 0;">Maxtor DiamondMax 21, 320 GB, 7200</div>
<div class="a" style="left:133.6px;top:273.40px;width:482.4px;height:11.42px;background:#ffffff"></div>
<div class="t" style="left:135.20px;top:275.00px;font-size:7.3px;color:#151515;transform:scaleX(0.821);transform-origin:0 0;">MD000015HD</div>
<div class="t" style="left:197.00px;top:275.00px;font-size:7.3px;color:#151515;transform:scaleX(0.844);transform-origin:0 0;">FPIDE00004</div>
<div class="t" style="left:264.80px;top:275.00px;font-size:7.3px;color:#151515;transform:scaleX(0.889);transform-origin:0 0;">Maxtor Dia</div>
<div class="t" style="right:309.30px;top:275.00px;font-size:7.3px;color:#151515;transform:scaleX(0.88);transform-origin:100% 0;">70007</div>
<div class="t" style="left:394.30px;top:275.00px;font-size:7.3px;color:#151515;transform:scaleX(0.868);transform-origin:0 0;">Maxtor DiamondMax 21, 320 GB, 7200</div>
<div class="a" style="left:133.6px;top:284.80px;width:482.4px;height:11.42px;background:#dce8fb"></div>
<div class="t" style="left:135.20px;top:287.00px;font-size:7.3px;color:#151515;transform:scaleX(0.821);transform-origin:0 0;">MD000016HD</div>
<div class="t" style="left:197.00px;top:287.00px;font-size:7.3px;color:#151515;transform:scaleX(0.844);transform-origin:0 0;">FPIDE00004</div>
<div class="t" style="left:264.80px;top:287.00px;font-size:7.3px;color:#151515;transform:scaleX(0.889);transform-origin:0 0;">Maxtor Dia</div>
<div class="t" style="right:309.30px;top:287.00px;font-size:7.3px;color:#151515;transform:scaleX(0.88);transform-origin:100% 0;">70007</div>
<div class="t" style="left:394.30px;top:287.00px;font-size:7.3px;color:#151515;transform:scaleX(0.868);transform-origin:0 0;">Maxtor DiamondMax 21, 320 GB, 7200</div>
<div class="a" style="left:133.6px;top:296.20px;width:482.4px;height:11.42px;background:#ffffff"></div>
<div class="t" style="left:135.20px;top:298.00px;font-size:7.3px;color:#151515;transform:scaleX(0.821);transform-origin:0 0;">MD000017HD</div>
<div class="t" style="left:197.00px;top:298.00px;font-size:7.3px;color:#151515;transform:scaleX(0.844);transform-origin:0 0;">FPIDE00004</div>
<div class="t" style="left:264.80px;top:298.00px;font-size:7.3px;color:#151515;transform:scaleX(0.889);transform-origin:0 0;">Maxtor Dia</div>
<div class="t" style="right:309.30px;top:298.00px;font-size:7.3px;color:#151515;transform:scaleX(0.88);transform-origin:100% 0;">70007</div>
<div class="t" style="left:394.30px;top:298.00px;font-size:7.3px;color:#151515;transform:scaleX(0.868);transform-origin:0 0;">Maxtor DiamondMax 21, 320 GB, 7200</div>
<div class="a" style="left:133.6px;top:307.60px;width:482.4px;height:11.42px;background:#dce8fb"></div>
<div class="t" style="left:135.20px;top:310.00px;font-size:7.3px;color:#151515;transform:scaleX(0.821);transform-origin:0 0;">MD000018HD</div>
<div class="t" style="left:197.00px;top:310.00px;font-size:7.3px;color:#151515;transform:scaleX(0.844);transform-origin:0 0;">FPIDE00004</div>
<div class="t" style="left:264.80px;top:310.00px;font-size:7.3px;color:#151515;transform:scaleX(0.889);transform-origin:0 0;">Maxtor Dia</div>
<div class="t" style="right:309.30px;top:310.00px;font-size:7.3px;color:#151515;transform:scaleX(0.88);transform-origin:100% 0;">70007</div>
<div class="t" style="left:394.30px;top:310.00px;font-size:7.3px;color:#151515;transform:scaleX(0.868);transform-origin:0 0;">Maxtor DiamondMax 21, 320 GB, 7200</div>
<div class="a" style="left:133.6px;top:319.00px;width:482.4px;height:11.42px;background:#ffffff"></div>
<div class="t" style="left:135.20px;top:321.00px;font-size:7.3px;color:#151515;transform:scaleX(0.821);transform-origin:0 0;">MD000019HD</div>
<div class="t" style="left:197.00px;top:321.00px;font-size:7.3px;color:#151515;transform:scaleX(0.844);transform-origin:0 0;">FPIDE00004</div>
<div class="t" style="left:264.80px;top:321.00px;font-size:7.3px;color:#151515;transform:scaleX(0.889);transform-origin:0 0;">Maxtor Dia</div>
<div class="t" style="right:309.30px;top:321.00px;font-size:7.3px;color:#151515;transform:scaleX(0.88);transform-origin:100% 0;">70007</div>
<div class="t" style="left:394.30px;top:321.00px;font-size:7.3px;color:#151515;transform:scaleX(0.868);transform-origin:0 0;">Maxtor DiamondMax 21, 320 GB, 7200</div>
<div class="a" style="left:133.6px;top:330.40px;width:482.4px;height:11.42px;background:#dce8fb"></div>
<div class="t" style="left:135.20px;top:332.00px;font-size:7.3px;color:#151515;transform:scaleX(0.821);transform-origin:0 0;">MD000020HD</div>
<div class="t" style="left:197.00px;top:332.00px;font-size:7.3px;color:#151515;transform:scaleX(0.844);transform-origin:0 0;">FPIDE00004</div>
<div class="t" style="left:264.80px;top:332.00px;font-size:7.3px;color:#151515;transform:scaleX(0.889);transform-origin:0 0;">Maxtor Dia</div>
<div class="t" style="right:309.30px;top:332.00px;font-size:7.3px;color:#151515;transform:scaleX(0.88);transform-origin:100% 0;">70007</div>
<div class="t" style="left:394.30px;top:332.00px;font-size:7.3px;color:#151515;transform:scaleX(0.868);transform-origin:0 0;">Maxtor DiamondMax 21, 320 GB, 7200</div>
<div class="a" style="left:133.6px;top:341.80px;width:482.4px;height:11.42px;background:#ffffff"></div>
<div class="t" style="left:135.20px;top:344.00px;font-size:7.3px;color:#151515;transform:scaleX(0.821);transform-origin:0 0;">MD000021HD</div>
<div class="t" style="left:197.00px;top:344.00px;font-size:7.3px;color:#151515;transform:scaleX(0.844);transform-origin:0 0;">FPIDE00005</div>
<div class="t" style="left:264.80px;top:344.00px;font-size:7.3px;color:#151515;transform:scaleX(0.889);transform-origin:0 0;">Maxtor Dia</div>
<div class="t" style="right:309.30px;top:344.00px;font-size:7.3px;color:#151515;transform:scaleX(0.88);transform-origin:100% 0;">70007</div>
<div class="t" style="right:266.50px;top:344.00px;font-size:7.3px;color:#151515;transform:scaleX(0.88);transform-origin:100% 0;">30002</div>
<div class="t" style="left:394.30px;top:344.00px;font-size:7.3px;color:#151515;transform:scaleX(0.868);transform-origin:0 0;">Maxtor Diamondmax 10, 80 GB, 7200</div>
<div class="a" style="left:133.6px;top:353.20px;width:482.4px;height:11.42px;background:#dce8fb"></div>
<div class="t" style="left:135.20px;top:355.00px;font-size:7.3px;color:#151515;transform:scaleX(0.821);transform-origin:0 0;">MD000022HD</div>
<div class="t" style="left:197.00px;top:355.00px;font-size:7.3px;color:#151515;transform:scaleX(0.844);transform-origin:0 0;">FPIDE00005</div>
<div class="t" style="left:264.80px;top:355.00px;font-size:7.3px;color:#151515;transform:scaleX(0.889);transform-origin:0 0;">Maxtor Dia</div>
<div class="t" style="right:309.30px;top:355.00px;font-size:7.3px;color:#151515;transform:scaleX(0.88);transform-origin:100% 0;">70007</div>
<div class="t" style="right:266.50px;top:355.00px;font-size:7.3px;color:#151515;transform:scaleX(0.88);transform-origin:100% 0;">10002</div>
<div class="t" style="left:394.30px;top:355.00px;font-size:7.3px;color:#151515;transform:scaleX(0.868);transform-origin:0 0;">Maxtor Diamondmax 10, 80 GB, 7200</div>
<div class="a" style="left:133.6px;top:364.60px;width:482.4px;height:11.42px;background:#ffffff"></div>
<div class="t" style="left:135.20px;top:367.00px;font-size:7.3px;color:#151515;transform:scaleX(0.821);transform-origin:0 0;">MD000023HD</div>
<div class="t" style="left:197.00px;top:367.00px;font-size:7.3px;color:#151515;transform:scaleX(0.844);transform-origin:0 0;">FPIDE00005</div>
<div class="t" style="left:264.80px;top:367.00px;font-size:7.3px;color:#151515;transform:scaleX(0.889);transform-origin:0 0;">Maxtor Dia</div>
<div class="t" style="right:309.30px;top:367.00px;font-size:7.3px;color:#151515;transform:scaleX(0.88);transform-origin:100% 0;">70007</div>
<div class="t" style="right:266.50px;top:367.00px;font-size:7.3px;color:#151515;transform:scaleX(0.88);transform-origin:100% 0;">10018</div>
<div class="t" style="left:394.30px;top:367.00px;font-size:7.3px;color:#151515;transform:scaleX(0.868);transform-origin:0 0;">Maxtor Diamondmax 10, 80 GB, 7200</div>
<div class="a" style="left:133.6px;top:376.00px;width:482.4px;height:11.42px;background:#dce8fb"></div>
<div class="t" style="left:135.20px;top:378.00px;font-size:7.3px;color:#151515;transform:scaleX(0.821);transform-origin:0 0;">MD000024HD</div>
<div class="t" style="left:197.00px;top:378.00px;font-size:7.3px;color:#151515;transform:scaleX(0.844);transform-origin:0 0;">FPIDE00005</div>
<div class="t" style="left:264.80px;top:378.00px;font-size:7.3px;color:#151515;transform:scaleX(0.889);transform-origin:0 0;">Maxtor Dia</div>
<div class="t" style="right:309.30px;top:378.00px;font-size:7.3px;color:#151515;transform:scaleX(0.88);transform-origin:100% 0;">70007</div>
<div class="t" style="right:266.50px;top:378.00px;font-size:7.3px;color:#151515;transform:scaleX(0.88);transform-origin:100% 0;">20066</div>
<div class="t" style="left:394.30px;top:378.00px;font-size:7.3px;color:#151515;transform:scaleX(0.868);transform-origin:0 0;">Maxtor Diamondmax 10, 80 GB, 7200</div>
<div class="a" style="left:133.6px;top:387.40px;width:482.4px;height:11.42px;background:#ffffff"></div>
<div class="t" style="left:135.20px;top:389.00px;font-size:7.3px;color:#151515;transform:scaleX(0.821);transform-origin:0 0;">MD000025HD</div>
<div class="t" style="left:197.00px;top:389.00px;font-size:7.3px;color:#151515;transform:scaleX(0.844);transform-origin:0 0;">FPIDE00005</div>
<div class="t" style="left:264.80px;top:389.00px;font-size:7.3px;color:#151515;transform:scaleX(0.889);transform-origin:0 0;">Maxtor Dia</div>
<div class="t" style="right:309.30px;top:389.00px;font-size:7.3px;color:#151515;transform:scaleX(0.88);transform-origin:100% 0;">70007</div>
<div class="t" style="right:266.50px;top:389.00px;font-size:7.3px;color:#151515;transform:scaleX(0.88);transform-origin:100% 0;">20066</div>
<div class="t" style="left:394.30px;top:389.00px;font-size:7.3px;color:#151515;transform:scaleX(0.868);transform-origin:0 0;">Maxtor Diamondmax 10, 80 GB, 7200</div>
<div class="a" style="left:133.6px;top:398.80px;width:482.4px;height:11.42px;background:#dce8fb"></div>
<div class="t" style="left:135.20px;top:401.00px;font-size:7.3px;color:#151515;transform:scaleX(0.821);transform-origin:0 0;">MD000026HD</div>
<div class="t" style="left:197.00px;top:401.00px;font-size:7.3px;color:#151515;transform:scaleX(0.844);transform-origin:0 0;">FPIDE00005</div>
<div class="t" style="left:264.80px;top:401.00px;font-size:7.3px;color:#151515;transform:scaleX(0.889);transform-origin:0 0;">Maxtor Dia</div>
<div class="t" style="right:309.30px;top:401.00px;font-size:7.3px;color:#151515;transform:scaleX(0.88);transform-origin:100% 0;">70007</div>
<div class="t" style="right:266.50px;top:401.00px;font-size:7.3px;color:#151515;transform:scaleX(0.88);transform-origin:100% 0;">30000</div>
<div class="t" style="left:394.30px;top:401.00px;font-size:7.3px;color:#151515;transform:scaleX(0.868);transform-origin:0 0;">Maxtor Diamondmax 10, 80 GB, 7200</div>
<div class="a" style="left:133.6px;top:410.20px;width:482.4px;height:11.42px;background:#ffffff"></div>
<div class="t" style="left:135.20px;top:412.00px;font-size:7.3px;color:#151515;transform:scaleX(0.821);transform-origin:0 0;">MD000027HD</div>
<div class="t" style="left:197.00px;top:412.00px;font-size:7.3px;color:#151515;transform:scaleX(0.844);transform-origin:0 0;">FPIDE00005</div>
<div class="t" style="left:264.80px;top:412.00px;font-size:7.3px;color:#151515;transform:scaleX(0.889);transform-origin:0 0;">Maxtor Dia</div>
<div class="t" style="right:309.30px;top:412.00px;font-size:7.3px;color:#151515;transform:scaleX(0.88);transform-origin:100% 0;">70007</div>
<div class="t" style="right:266.50px;top:412.00px;font-size:7.3px;color:#151515;transform:scaleX(0.88);transform-origin:100% 0;">30000</div>
<div class="t" style="left:394.30px;top:412.00px;font-size:7.3px;color:#151515;transform:scaleX(0.868);transform-origin:0 0;">Maxtor Diamondmax 10, 80 GB, 7200</div>
<div class="a" style="left:133.6px;top:421.60px;width:482.4px;height:11.42px;background:#dce8fb"></div>
<div class="t" style="left:135.20px;top:424.00px;font-size:7.3px;color:#151515;transform:scaleX(0.821);transform-origin:0 0;">MD000028HD</div>
<div class="t" style="left:197.00px;top:424.00px;font-size:7.3px;color:#151515;transform:scaleX(0.844);transform-origin:0 0;">FPIDE00005</div>
<div class="t" style="left:264.80px;top:424.00px;font-size:7.3px;color:#151515;transform:scaleX(0.889);transform-origin:0 0;">Maxtor Dia</div>
<div class="t" style="right:309.30px;top:424.00px;font-size:7.3px;color:#151515;transform:scaleX(0.88);transform-origin:100% 0;">70007</div>
<div class="t" style="left:394.30px;top:424.00px;font-size:7.3px;color:#151515;transform:scaleX(0.868);transform-origin:0 0;">Maxtor Diamondmax 10, 80 GB, 7200</div>
<div class="a" style="left:133.6px;top:433.00px;width:482.4px;height:11.42px;background:#ffffff"></div>
<div class="t" style="left:135.20px;top:435.00px;font-size:7.3px;color:#151515;transform:scaleX(0.821);transform-origin:0 0;">MD000029HD</div>
<div class="t" style="left:197.00px;top:435.00px;font-size:7.3px;color:#151515;transform:scaleX(0.844);transform-origin:0 0;">FPIDE00005</div>
<div class="t" style="left:264.80px;top:435.00px;font-size:7.3px;color:#151515;transform:scaleX(0.889);transform-origin:0 0;">Maxtor Dia</div>
<div class="t" style="right:309.30px;top:435.00px;font-size:7.3px;color:#151515;transform:scaleX(0.88);transform-origin:100% 0;">70007</div>
<div class="t" style="left:394.30px;top:435.00px;font-size:7.3px;color:#151515;transform:scaleX(0.868);transform-origin:0 0;">Maxtor Diamondmax 10, 80 GB, 7200</div>
<div class="a" style="left:133.6px;top:444.40px;width:482.4px;height:11.42px;background:#dce8fb"></div>
<div class="t" style="left:135.20px;top:446.00px;font-size:7.3px;color:#151515;transform:scaleX(0.821);transform-origin:0 0;">MD000030HD</div>
<div class="t" style="left:197.00px;top:446.00px;font-size:7.3px;color:#151515;transform:scaleX(0.844);transform-origin:0 0;">FPIDE00005</div>
<div class="t" style="left:264.80px;top:446.00px;font-size:7.3px;color:#151515;transform:scaleX(0.889);transform-origin:0 0;">Maxtor Dia</div>
<div class="t" style="right:309.30px;top:446.00px;font-size:7.3px;color:#151515;transform:scaleX(0.88);transform-origin:100% 0;">70007</div>
<div class="t" style="left:394.30px;top:446.00px;font-size:7.3px;color:#151515;transform:scaleX(0.868);transform-origin:0 0;">Maxtor Diamondmax 10, 80 GB, 7200</div>
<div class="a" style="left:133.6px;top:455.80px;width:482.4px;height:11.42px;background:#ffffff"></div>
<div class="t" style="left:135.20px;top:458.00px;font-size:7.3px;color:#151515;transform:scaleX(0.821);transform-origin:0 0;">MD000031HD</div>
<div class="t" style="left:197.00px;top:458.00px;font-size:7.3px;color:#151515;transform:scaleX(0.844);transform-origin:0 0;">FPIDE00005</div>
<div class="t" style="left:264.80px;top:458.00px;font-size:7.3px;color:#151515;transform:scaleX(0.889);transform-origin:0 0;">Maxtor Dia</div>
<div class="t" style="right:309.30px;top:458.00px;font-size:7.3px;color:#151515;transform:scaleX(0.88);transform-origin:100% 0;">70007</div>
<div class="t" style="left:394.30px;top:458.00px;font-size:7.3px;color:#151515;transform:scaleX(0.868);transform-origin:0 0;">Maxtor Diamondmax 10, 80 GB, 7200</div>
<div class="a" style="left:133.6px;top:467.20px;width:482.4px;height:11.42px;background:#dce8fb"></div>
<div class="t" style="left:135.20px;top:469.00px;font-size:7.3px;color:#151515;transform:scaleX(0.821);transform-origin:0 0;">MD000032HD</div>
<div class="t" style="left:197.00px;top:469.00px;font-size:7.3px;color:#151515;transform:scaleX(0.844);transform-origin:0 0;">FPIDE00005</div>
<div class="t" style="left:264.80px;top:469.00px;font-size:7.3px;color:#151515;transform:scaleX(0.889);transform-origin:0 0;">Maxtor Dia</div>
<div class="t" style="right:309.30px;top:469.00px;font-size:7.3px;color:#151515;transform:scaleX(0.88);transform-origin:100% 0;">70007</div>
<div class="t" style="left:394.30px;top:469.00px;font-size:7.3px;color:#151515;transform:scaleX(0.868);transform-origin:0 0;">Maxtor Diamondmax 10, 80 GB, 7200</div>
<div class="a" style="left:133.6px;top:478.60px;width:482.4px;height:11.42px;background:#ffffff"></div>
<div class="t" style="left:135.20px;top:481.00px;font-size:7.3px;color:#151515;transform:scaleX(0.821);transform-origin:0 0;">MD000033HD</div>
<div class="t" style="left:197.00px;top:481.00px;font-size:7.3px;color:#151515;transform:scaleX(0.844);transform-origin:0 0;">FPIDE00005</div>
<div class="t" style="left:264.80px;top:481.00px;font-size:7.3px;color:#151515;transform:scaleX(0.889);transform-origin:0 0;">Maxtor Dia</div>
<div class="t" style="right:309.30px;top:481.00px;font-size:7.3px;color:#151515;transform:scaleX(0.88);transform-origin:100% 0;">70007</div>
<div class="t" style="left:394.30px;top:481.00px;font-size:7.3px;color:#151515;transform:scaleX(0.868);transform-origin:0 0;">Maxtor Diamondmax 10, 80 GB, 7200</div>
<div class="a" style="left:133.6px;top:490.00px;width:482.4px;height:11.42px;background:#dce8fb"></div>
<div class="t" style="left:135.20px;top:492.00px;font-size:7.3px;color:#151515;transform:scaleX(0.821);transform-origin:0 0;">MD000034HD</div>
<div class="t" style="left:197.00px;top:492.00px;font-size:7.3px;color:#151515;transform:scaleX(0.844);transform-origin:0 0;">FPIDE00005</div>
<div class="t" style="left:264.80px;top:492.00px;font-size:7.3px;color:#151515;transform:scaleX(0.889);transform-origin:0 0;">Maxtor Dia</div>
<div class="t" style="right:309.30px;top:492.00px;font-size:7.3px;color:#151515;transform:scaleX(0.88);transform-origin:100% 0;">70007</div>
<div class="t" style="left:394.30px;top:492.00px;font-size:7.3px;color:#151515;transform:scaleX(0.868);transform-origin:0 0;">Maxtor Diamondmax 10, 80 GB, 7200</div>
<div class="a" style="left:194.5px;top:102.4px;width:1px;height:399.0px;background:rgba(160,180,215,0.30)"></div>
<div class="a" style="left:194.5px;top:91.0px;width:1px;height:11.4px;background:rgba(200,215,245,0.45)"></div>
<div class="a" style="left:262.3px;top:102.4px;width:1px;height:399.0px;background:rgba(160,180,215,0.30)"></div>
<div class="a" style="left:262.3px;top:91.0px;width:1px;height:11.4px;background:rgba(200,215,245,0.45)"></div>
<div class="a" style="left:305.5px;top:102.4px;width:1px;height:399.0px;background:rgba(160,180,215,0.30)"></div>
<div class="a" style="left:305.5px;top:91.0px;width:1px;height:11.4px;background:rgba(200,215,245,0.45)"></div>
<div class="a" style="left:349.0px;top:102.4px;width:1px;height:399.0px;background:rgba(160,180,215,0.30)"></div>
<div class="a" style="left:349.0px;top:91.0px;width:1px;height:11.4px;background:rgba(200,215,245,0.45)"></div>
<div class="a" style="left:391.8px;top:102.4px;width:1px;height:399.0px;background:rgba(160,180,215,0.30)"></div>
<div class="a" style="left:391.8px;top:91.0px;width:1px;height:11.4px;background:rgba(200,215,245,0.45)"></div>
<div class="a" style="left:616px;top:91.0px;width:10px;height:416.0px;background:linear-gradient(90deg,#ffffff 40%,#dfe9f8 100%)"></div>
<svg style="left:618.4px;top:93px" width="6" height="5.5" viewBox="0 0 6 5.5"><path d="M0.3 0.5 L5.7 0.5" stroke="#a3b092" stroke-width="0.9"/><path d="M0.2 5 L3 1.4 L5.8 5 Z" fill="#a3b092"/></svg>
<svg style="left:618.4px;top:102.6px" width="6" height="4.6" viewBox="0 0 6 4.6"><path d="M0.2 2.6 L3 0.2 L5.8 2.6 L3 4.5 Z" fill="#a3b092"/></svg>
<svg style="left:618.4px;top:112.4px" width="6" height="3.6" viewBox="0 0 6 3.6"><path d="M0.2 3.5 L3 0.2 L5.8 3.5 Z" fill="#a3b092"/></svg>
<svg style="left:618.8px;top:484px" width="6" height="3.2" viewBox="0 0 6 3.2"><path d="M0.2 0.1 L3 3.1 L5.8 0.1 Z" fill="#a3b092"/></svg>
<svg style="left:618.8px;top:492.6px" width="6" height="4.4" viewBox="0 0 6 4.4"><path d="M0.2 1.9 L3 4.3 L5.8 1.9 L3 0 Z" fill="#a3b092"/></svg>
<svg style="left:618.8px;top:501.6px" width="6" height="5" viewBox="0 0 6 5"><path d="M0.2 0.2 L3 3.6 L5.8 0.2 Z" fill="#a3b092"/><path d="M0.3 4.4 L5.7 4.4" stroke="#a3b092" stroke-width="0.9"/></svg>
<svg style="left:617.8px;top:277px" width="7" height="6" viewBox="0 0 7 6"><path d="M1.6 0.4 Q0.3 3 1.6 5.6" fill="none" stroke="#a9b890" stroke-width="1"/><path d="M5.4 0.4 Q6.7 3 5.4 5.6" fill="none" stroke="#a9b890" stroke-width="1"/><path d="M3.5 0.5 L3.5 5.5" stroke="#a9b890" stroke-width="1.1"/></svg>
<svg style="left:617.4px;top:288.4px" width="9" height="9" viewBox="0 0 9 9"><circle cx="3.8" cy="3.6" r="2.7" fill="#f4f6f0" stroke="#b4bea6" stroke-width="1"/><path d="M5.8 5.6 L8 8" stroke="#aab49c" stroke-width="1.5"/></svg>
<div class="t" style="left:617.60px;top:304.00px;font-size:7.0px;color:#b0bd9a;font-weight:bold;transform:scaleX(0.95);transform-origin:0 0;-webkit-text-stroke:0">%</div>
<svg style="left:618.0px;top:316.3px" width="7" height="7" viewBox="0 0 7 7"><path d="M0.4 0.5 L6.6 0.5 L4.1 3.4 L4.1 6.5 L2.9 6.5 L2.9 3.4 Z" fill="#e8ecdf" stroke="#a9b890" stroke-width="0.8"/></svg>
<div class="a" style="left:138.1px;top:512.3px;width:46.70px;height:14.5px;border-radius:2px;border:1px solid #98abc8;background:linear-gradient(#f6f9fe 0%,#e8f0fb 40%,#d2e2f7 75%,#c6daf4 100%)"></div>
<div class="t" style="left:138.1px;top:517px;width:46.70px;text-align:center;font-size:0"><span style="display:inline-block;font-size:7.2px;line-height:1;color:#1a1a1a;transform:scaleX(0.91);-webkit-text-stroke:0.15px #1a1a1a;text-decoration-thickness:0.6px;text-decoration-color:#5a6a80;text-underline-offset:0.8px">+ <u>M</u>arkieren</span></div>
<div class="a" style="left:187.0px;top:512.3px;width:53.90px;height:14.5px;border-radius:2px;border:1px solid #98abc8;background:linear-gradient(#f6f9fe 0%,#e8f0fb 40%,#d2e2f7 75%,#c6daf4 100%)"></div>
<div class="t" style="left:187.0px;top:517px;width:53.90px;text-align:center;font-size:0"><span style="display:inline-block;font-size:7.2px;line-height:1;color:#1a1a1a;transform:scaleX(0.91);-webkit-text-stroke:0.15px #1a1a1a;text-decoration-thickness:0.6px;text-decoration-color:#5a6a80;text-underline-offset:0.8px">- <u>E</u>ntmarkieren</span></div>
<div class="a" style="left:243.2px;top:512.3px;width:61.80px;height:14.5px;border-radius:2px;border:1px solid #98abc8;background:linear-gradient(#f6f9fe 0%,#e8f0fb 40%,#d2e2f7 75%,#c6daf4 100%)"></div>
<div class="t" style="left:243.2px;top:517px;width:61.80px;text-align:center;font-size:0"><span style="display:inline-block;font-size:7.2px;line-height:1;color:#1a1a1a;transform:scaleX(0.91);-webkit-text-stroke:0.15px #1a1a1a;text-decoration-thickness:0.6px;text-decoration-color:#5a6a80;text-underline-offset:0.8px"><u>S</u>tammdaten (F3)</span></div>
<div class="a" style="left:307.4px;top:512.3px;width:49.20px;height:14.5px;border-radius:2px;border:1px solid #98abc8;background:linear-gradient(#f6f9fe 0%,#e8f0fb 40%,#d2e2f7 75%,#c6daf4 100%)"></div>
<div class="t" style="left:307.4px;top:517px;width:49.20px;text-align:center;font-size:0"><span style="display:inline-block;font-size:7.2px;line-height:1;color:#1a1a1a;transform:scaleX(0.91);-webkit-text-stroke:0.15px #1a1a1a;text-decoration-thickness:0.6px;text-decoration-color:#5a6a80;text-underline-offset:0.8px"><u>D</u>rucken (F4)</span></div>
<div class="a" style="left:359.2px;top:512.3px;width:72.80px;height:14.5px;border-radius:2px;border:1px solid #98abc8;background:linear-gradient(#f6f9fe 0%,#e8f0fb 40%,#d2e2f7 75%,#c6daf4 100%)"></div>
<div class="t" style="left:359.2px;top:517px;width:72.80px;text-align:center;font-size:0"><span style="display:inline-block;font-size:7.2px;line-height:1;color:#1a1a1a;transform:scaleX(0.91);-webkit-text-stroke:0.15px #1a1a1a;text-decoration-thickness:0.6px;text-decoration-color:#5a6a80;text-underline-offset:0.8px">Aus<u>w</u>ertung (Return)</span></div>
</body></html>
